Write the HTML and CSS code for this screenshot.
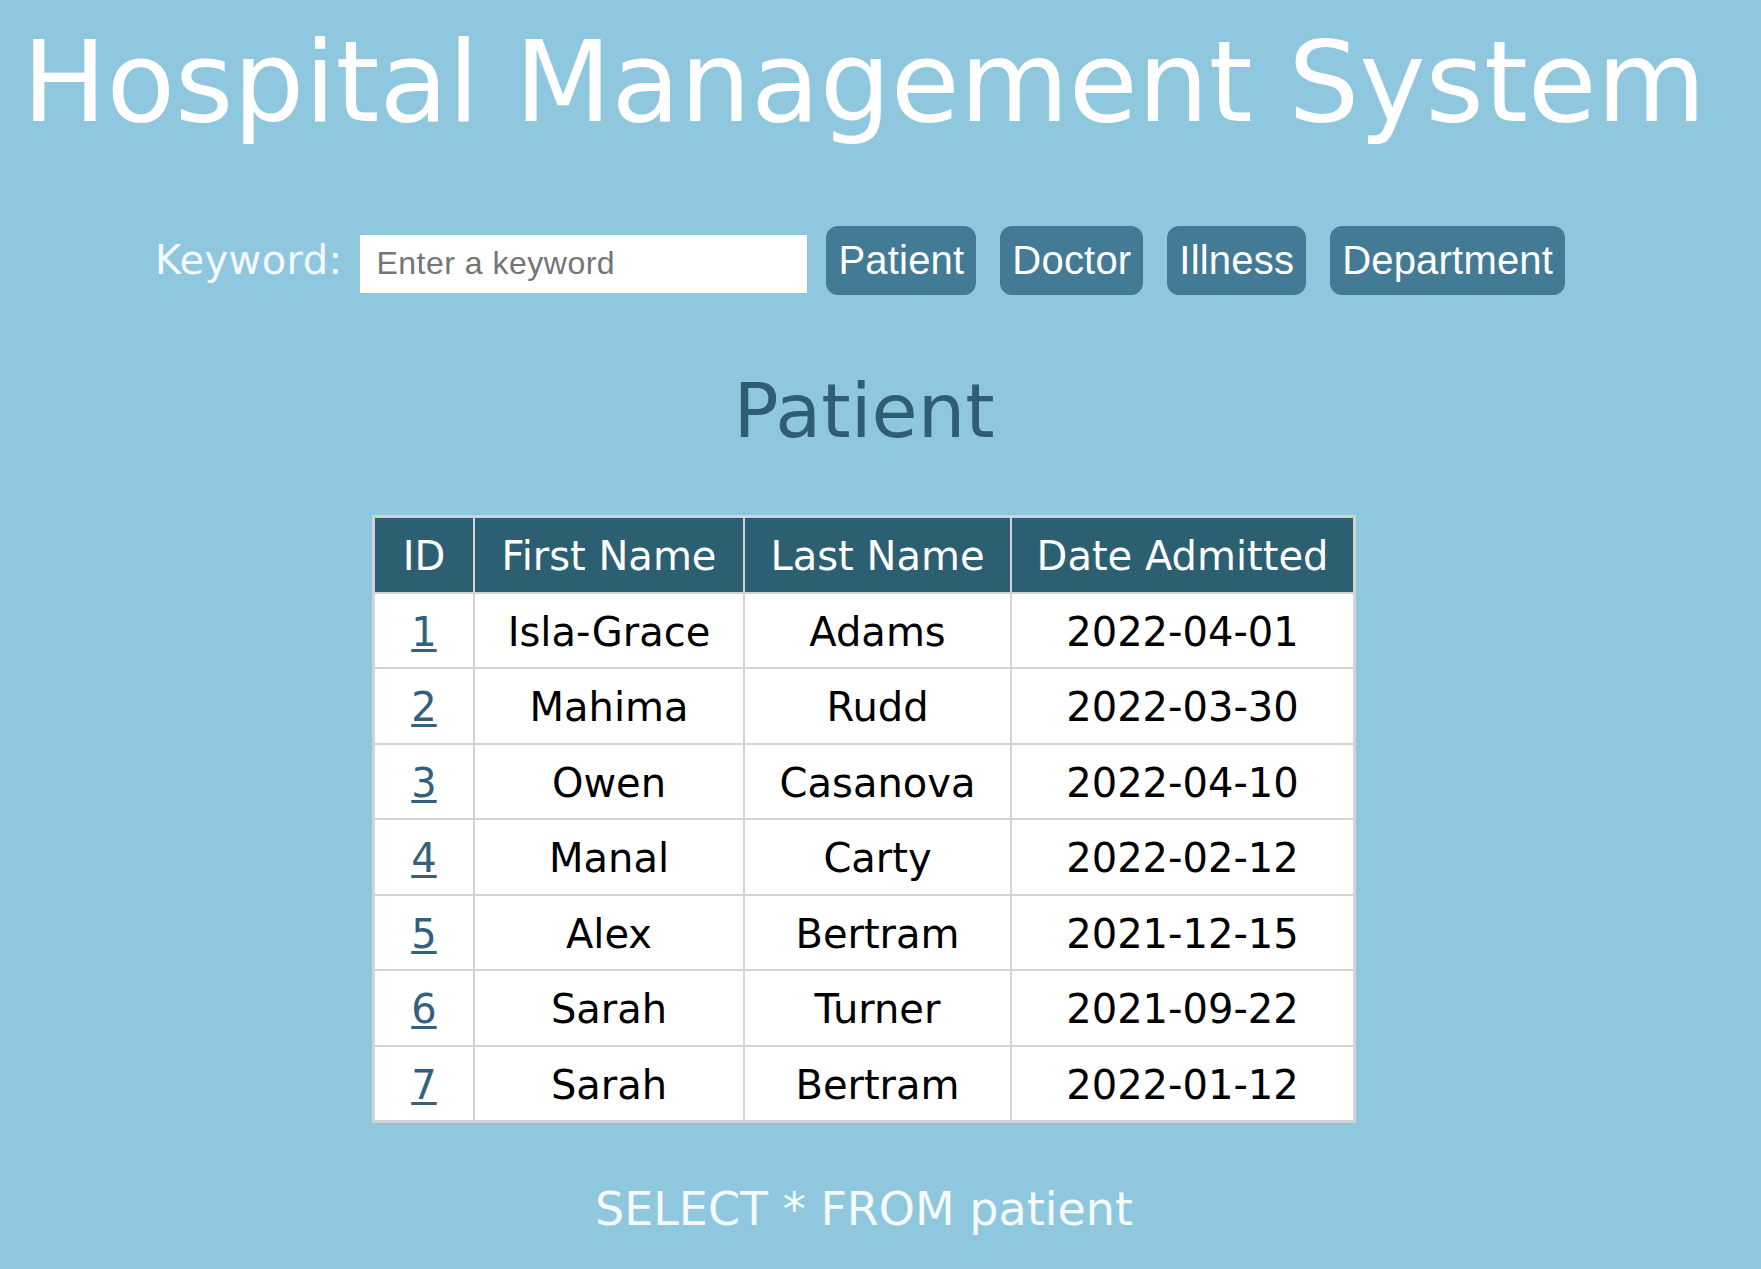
FILE: index.html
```html
<!DOCTYPE html>
<html lang="en">
<head>
<meta charset="utf-8">
<title>Hospital Management System</title>
<link rel="stylesheet" href="styles.css">
</head>
<body>
<div class="page">
  <h1 class="title">Hospital Management System</h1>
  <form class="search">
    <label class="search-label" for="kw">Keyword:</label>
    <input class="search-input" id="kw" type="text" placeholder="Enter a keyword">
    <button class="btn" type="button">Patient</button>
    <button class="btn" type="button">Doctor</button>
    <button class="btn" type="button">Illness</button>
    <button class="btn" type="button">Department</button>
  </form>
  <h2 class="section-title">Patient</h2>
  <table class="data">
    <colgroup>
      <col class="c-id">
      <col class="c-first">
      <col class="c-last">
      <col class="c-date">
    </colgroup>
    <thead>
      <tr><th>ID</th><th>First Name</th><th>Last Name</th><th>Date Admitted</th></tr>
    </thead>
    <tbody>
      <tr><td><a href="#">1</a></td><td>Isla-Grace</td><td>Adams</td><td>2022-04-01</td></tr>
      <tr><td><a href="#">2</a></td><td>Mahima</td><td>Rudd</td><td>2022-03-30</td></tr>
      <tr><td><a href="#">3</a></td><td>Owen</td><td>Casanova</td><td>2022-04-10</td></tr>
      <tr><td><a href="#">4</a></td><td>Manal</td><td>Carty</td><td>2022-02-12</td></tr>
      <tr><td><a href="#">5</a></td><td>Alex</td><td>Bertram</td><td>2021-12-15</td></tr>
      <tr><td><a href="#">6</a></td><td>Sarah</td><td>Turner</td><td>2021-09-22</td></tr>
      <tr><td><a href="#">7</a></td><td>Sarah</td><td>Bertram</td><td>2022-01-12</td></tr>
    </tbody>
  </table>
  <p class="query">SELECT * FROM patient</p>
</div>
</body>
</html>
```
FILE: styles.css
```css
html, body {
  margin: 0;
  padding: 0;
  background: #8fc8de;
}
body {
  font-family: "DejaVu Sans", Verdana, sans-serif;
  color: #000;
}
.page {
  width: 1712px;
  margin: 0 8px;
  padding-bottom: 40px;
  display: flex;
  flex-direction: column;
  align-items: center;
}
.title {
  margin: 17px 0 0;
  font-size: 112px;
  font-weight: normal;
  line-height: normal;
  color: #ffffff;
  white-space: nowrap;
}
.search {
  margin-top: 79px;
  display: flex;
  align-items: baseline;
  justify-content: center;
  margin-right: 8px;
}
.search-label {
  font-size: 40px;
  letter-spacing: 0.4px;
  color: #f4fafd;
  margin-right: 18px;
}
.search-input {
  width: 447px;
  height: 58px;
  box-sizing: border-box;
  border: none;
  outline: none;
  padding: 0 16px;
  font-family: "Liberation Sans", Arial, sans-serif;
  font-size: 32px;
  letter-spacing: 0.5px;
  background: #fff;
  color: #333;
  margin-right: 19px;
}
.search-input::placeholder {
  color: #757575;
}
.btn {
  font-family: "Liberation Sans", Arial, sans-serif;
  font-size: 40px;
  letter-spacing: 0.2px;
  line-height: normal;
  color: #ffffff;
  background: #437b96;
  border: none;
  border-radius: 12px;
  padding: 12px 12px;
  margin-right: 24px;
  cursor: pointer;
}
.btn:last-child {
  margin-right: 0;
}
.section-title {
  margin: 72px 0 0;
  font-size: 75px;
  font-weight: normal;
  line-height: normal;
  color: #2f5d76;
}
.data {
  margin-top: 60px;
  width: 984px;
  table-layout: fixed;
  border-collapse: separate;
  border-spacing: 2px;
  border: 1px solid #d3d3d3;
  background: #d3d3d3;
  font-size: 40px;
}
.c-id { width: 98px; }
.c-first { width: 268px; }
.c-last { width: 265px; }
.c-date { width: 341px; }
.data th,
.data td {
  padding: 15px 8px 11.5px;
  line-height: 47px;
  text-align: center;
  white-space: nowrap;
}
.data th {
  background: #2d5f73;
  color: #ffffff;
  font-weight: normal;
}
.data td {
  background: #ffffff;
  color: #000;
}
.data a {
  color: #35607d;
  text-decoration: underline;
  text-decoration-thickness: 3px;
  text-underline-offset: 3px;
}
.query {
  margin: 59px 0 0;
  font-size: 46px;
  line-height: normal;
  color: #f4fafd;
}
```
